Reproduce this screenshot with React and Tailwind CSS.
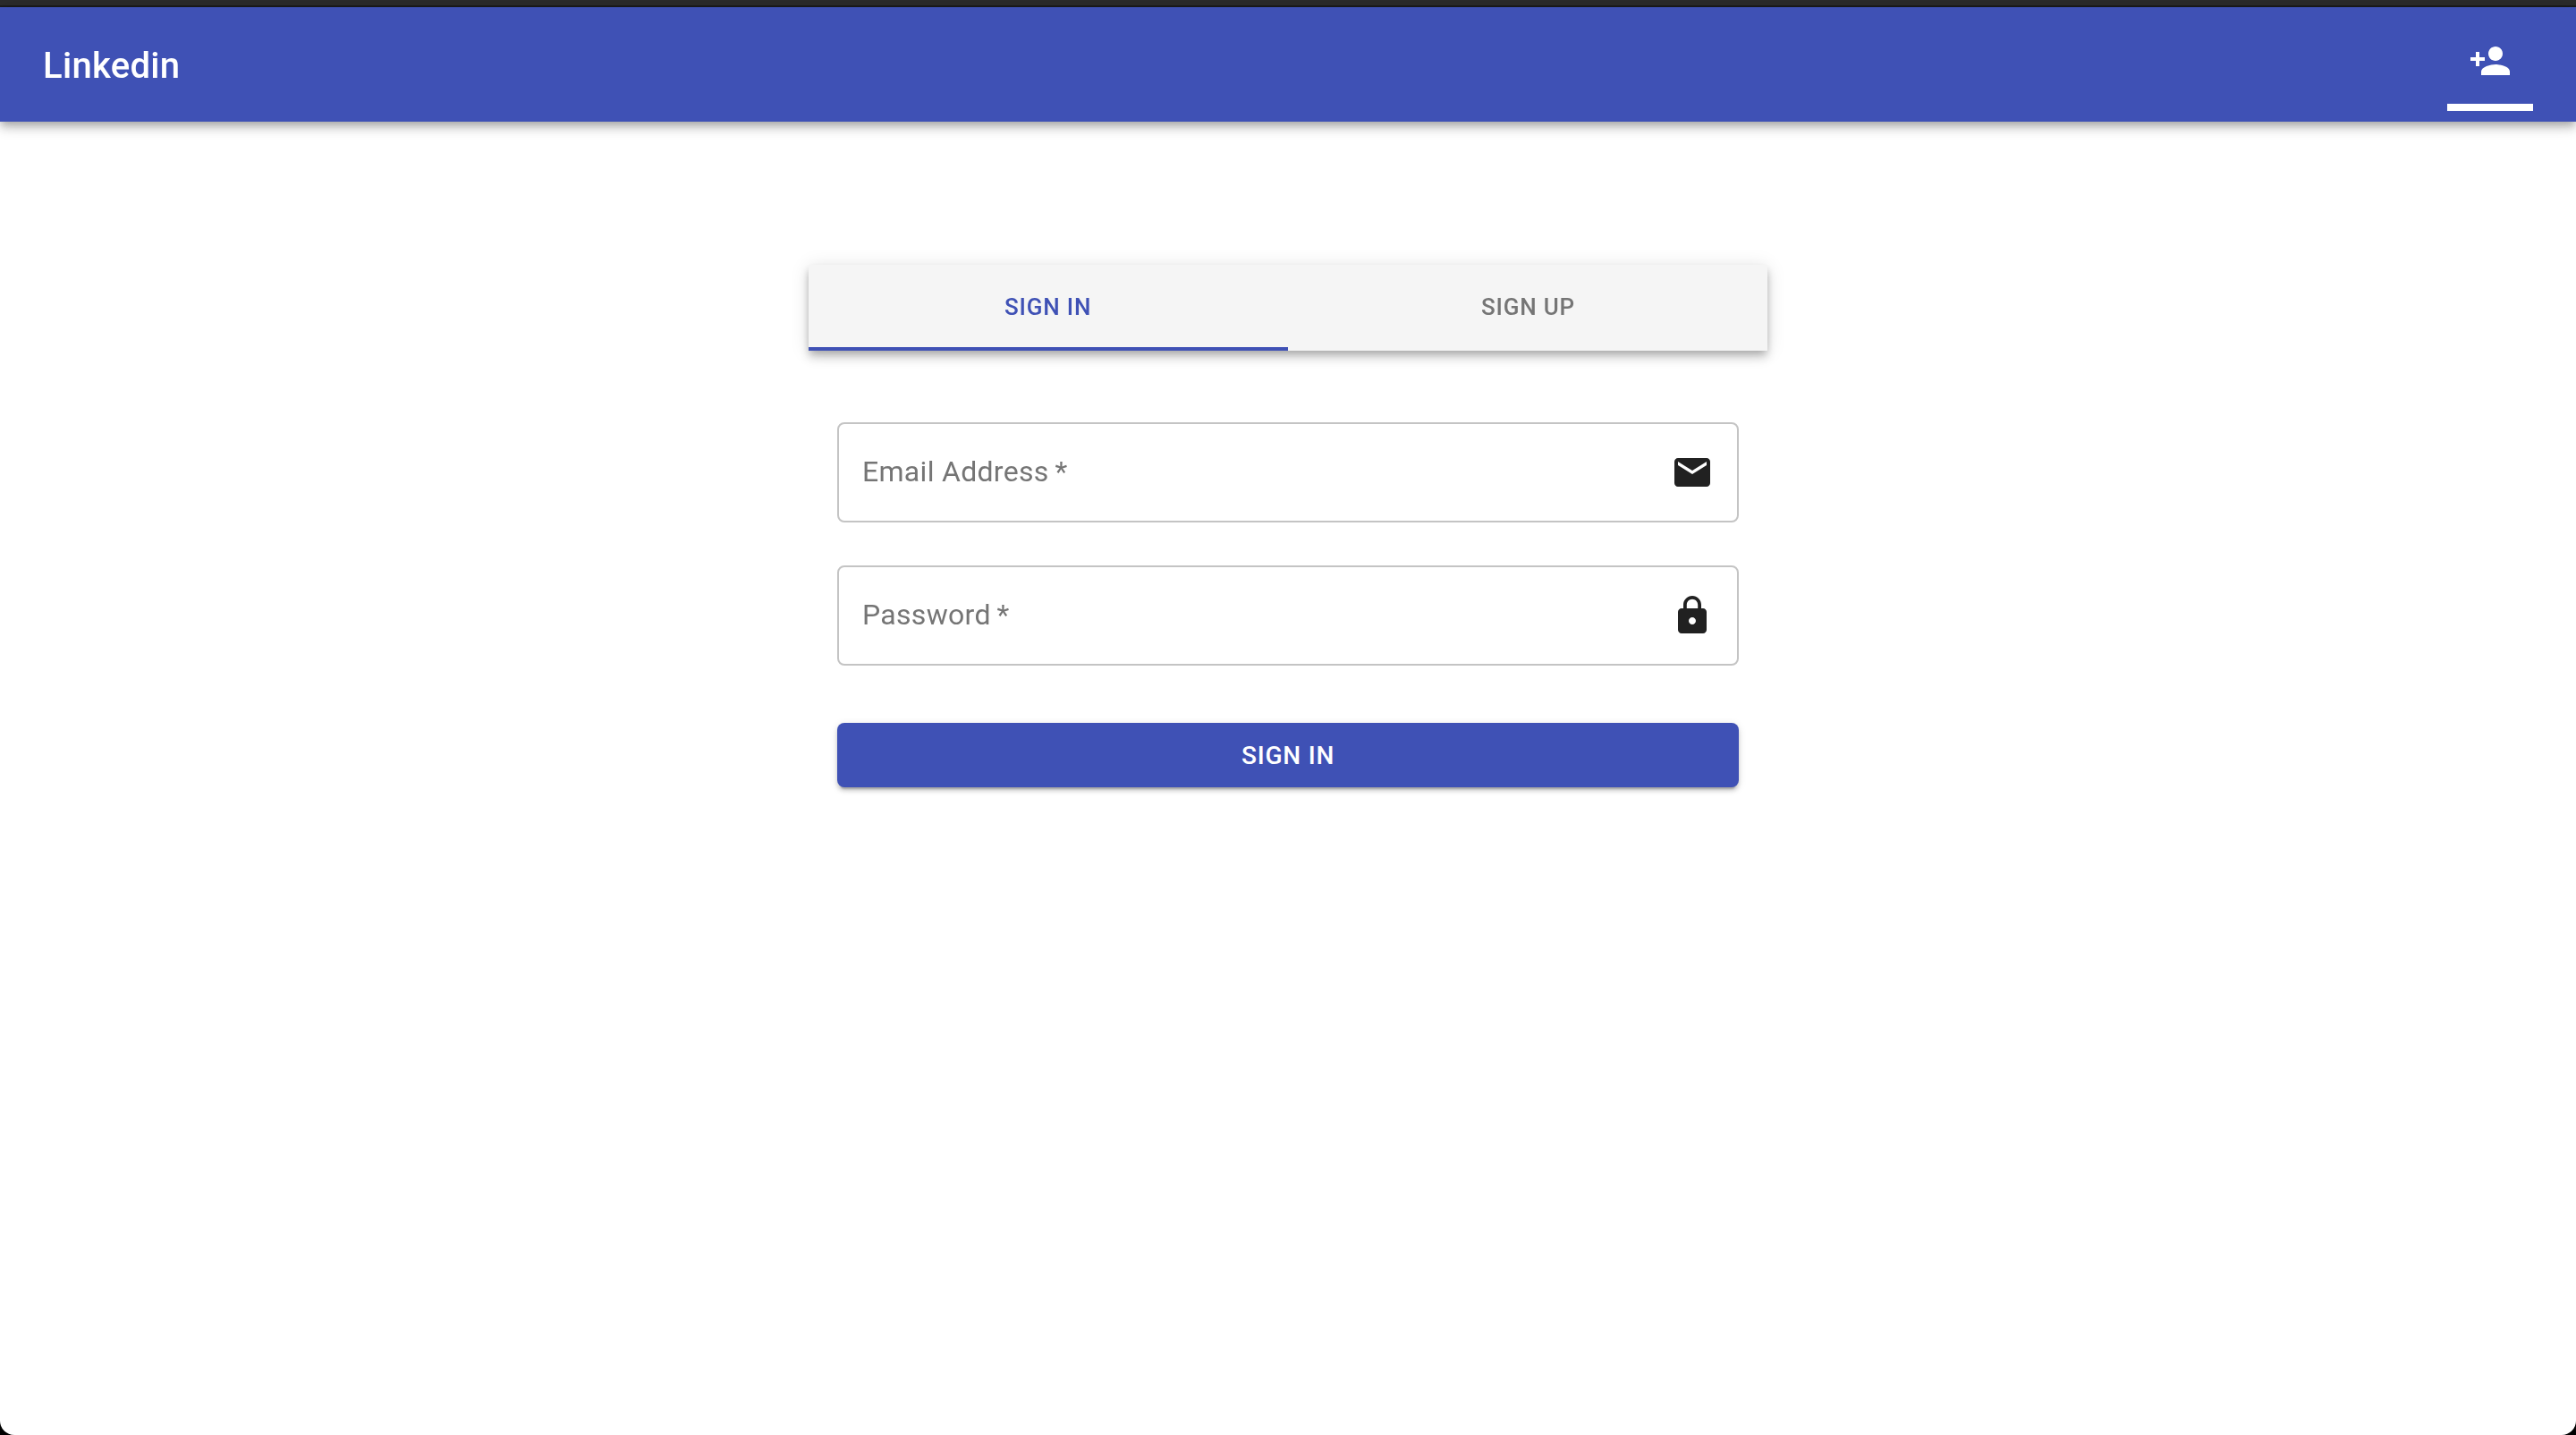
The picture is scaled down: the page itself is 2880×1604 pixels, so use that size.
import React from 'react';

const roboto = { fontFamily: 'Roboto, sans-serif' };

const PersonAddIcon = () => (
    <svg viewBox="0 0 24 24" className="w-12 h-12 fill-white">
        <path d="M15 12c2.21 0 4-1.79 4-4s-1.79-4-4-4-4 1.79-4 4 1.79 4 4 4zm-9-2V7H4v3H1v2h3v3h2v-3h3v-2H6zm9 4c-2.67 0-8 1.34-8 4v2h16v-2c0-2.66-5.33-4-8-4z" />
    </svg>
);

const MailIcon = () => (
    <svg viewBox="0 0 24 24" className="w-12 h-12 fill-[#212121]">
        <path d="M20 4H4c-1.1 0-1.99.9-1.99 2L2 18c0 1.1.9 2 2 2h16c1.1 0 2-.9 2-2V6c0-1.1-.9-2-2-2zm0 4l-8 5-8-5V6l8 5 8-5v2z" />
    </svg>
);

const LockIcon = () => (
    <svg viewBox="0 0 24 24" className="w-12 h-12 fill-[#212121]">
        <path d="M18 8h-1V6c0-2.76-2.24-5-5-5S7 3.24 7 6v2H6c-1.1 0-2 .9-2 2v10c0 1.1.9 2 2 2h12c1.1 0 2-.9 2-2V10c0-1.1-.9-2-2-2zm-6 9c-1.1 0-2-.9-2-2s.9-2 2-2 2 .9 2 2-.9 2-2 2zm3.1-9H8.9V6c0-1.71 1.39-3.1 3.1-3.1 1.71 0 3.1 1.39 3.1 3.1v2z" />
    </svg>
);

const Field = ({ label, icon }) => (
    <div className="h-[112px] flex items-center justify-between pl-[26px] pr-[26px] border-2 border-[#c4c4c4] rounded-lg bg-white">
        <span className="mb-[2px] text-[32px] leading-none tracking-[0.3px] text-[#757575] will-change-transform">{label}{'\u2009'}*</span>
        {icon}
    </div>
);

export default function App() {
    return (
        <div className="h-[1604px] flex flex-col bg-black overflow-hidden antialiased" style={roboto}>
            <div className="h-2 bg-[#2b2b2b] border-b-2 border-[#1c1c1c]"></div>

            <div className="flex-1 flex flex-col bg-white rounded-b-[16px]">
                <header className="h-[128px] pl-12 pr-12 flex justify-between items-center bg-[#3f51b5] shadow-[0_4px_8px_-2px_rgba(0,0,0,0.2),0_8px_10px_0_rgba(0,0,0,0.14),0_2px_20px_0_rgba(0,0,0,0.12)]">
                    <h1 className="mt-1 text-[40px] leading-none font-medium tracking-[0.3px] text-white will-change-transform">Linkedin</h1>
                    <div className="w-24 self-stretch mt-3 mb-3 flex items-center justify-center border-b-8 border-white">
                        <PersonAddIcon />
                    </div>
                </header>

                <main className="w-[1072px] mx-auto pt-40">
                    <div className="h-24 flex bg-[#f5f5f5] shadow-[0_4px_8px_-2px_rgba(0,0,0,0.2),0_8px_10px_0_rgba(0,0,0,0.14),0_2px_20px_0_rgba(0,0,0,0.12)]">
                        <div className="flex-1 flex items-center justify-center border-b-4 border-[#3f51b5] pt-[3px] text-[26px] font-medium tracking-[0.8px] text-[#3f51b5]">
                            <span className="will-change-transform">SIGN IN</span>
                        </div>
                        <div className="flex-1 flex items-center justify-center pb-px text-[26px] font-medium tracking-[0.8px] text-[#757575]">
                            <span className="will-change-transform">SIGN UP</span>
                        </div>
                    </div>

                    <form className="px-8 pt-20 flex flex-col">
                        <Field label="Email Address" icon={<MailIcon />} />
                        <div className="mt-12">
                            <Field label="Password" icon={<LockIcon />} />
                        </div>
                        <button type="button" className="mt-16 h-[72px] pt-[2px] rounded-lg bg-[#3f51b5] text-white text-[28px] font-medium tracking-[0.8px] shadow-[0_6px_2px_-4px_rgba(0,0,0,0.2),0_4px_4px_0_rgba(0,0,0,0.14),0_2px_10px_0_rgba(0,0,0,0.12)]">
                            <span className="will-change-transform">SIGN IN</span>
                        </button>
                    </form>
                </main>
            </div>
        </div>
    );
}
